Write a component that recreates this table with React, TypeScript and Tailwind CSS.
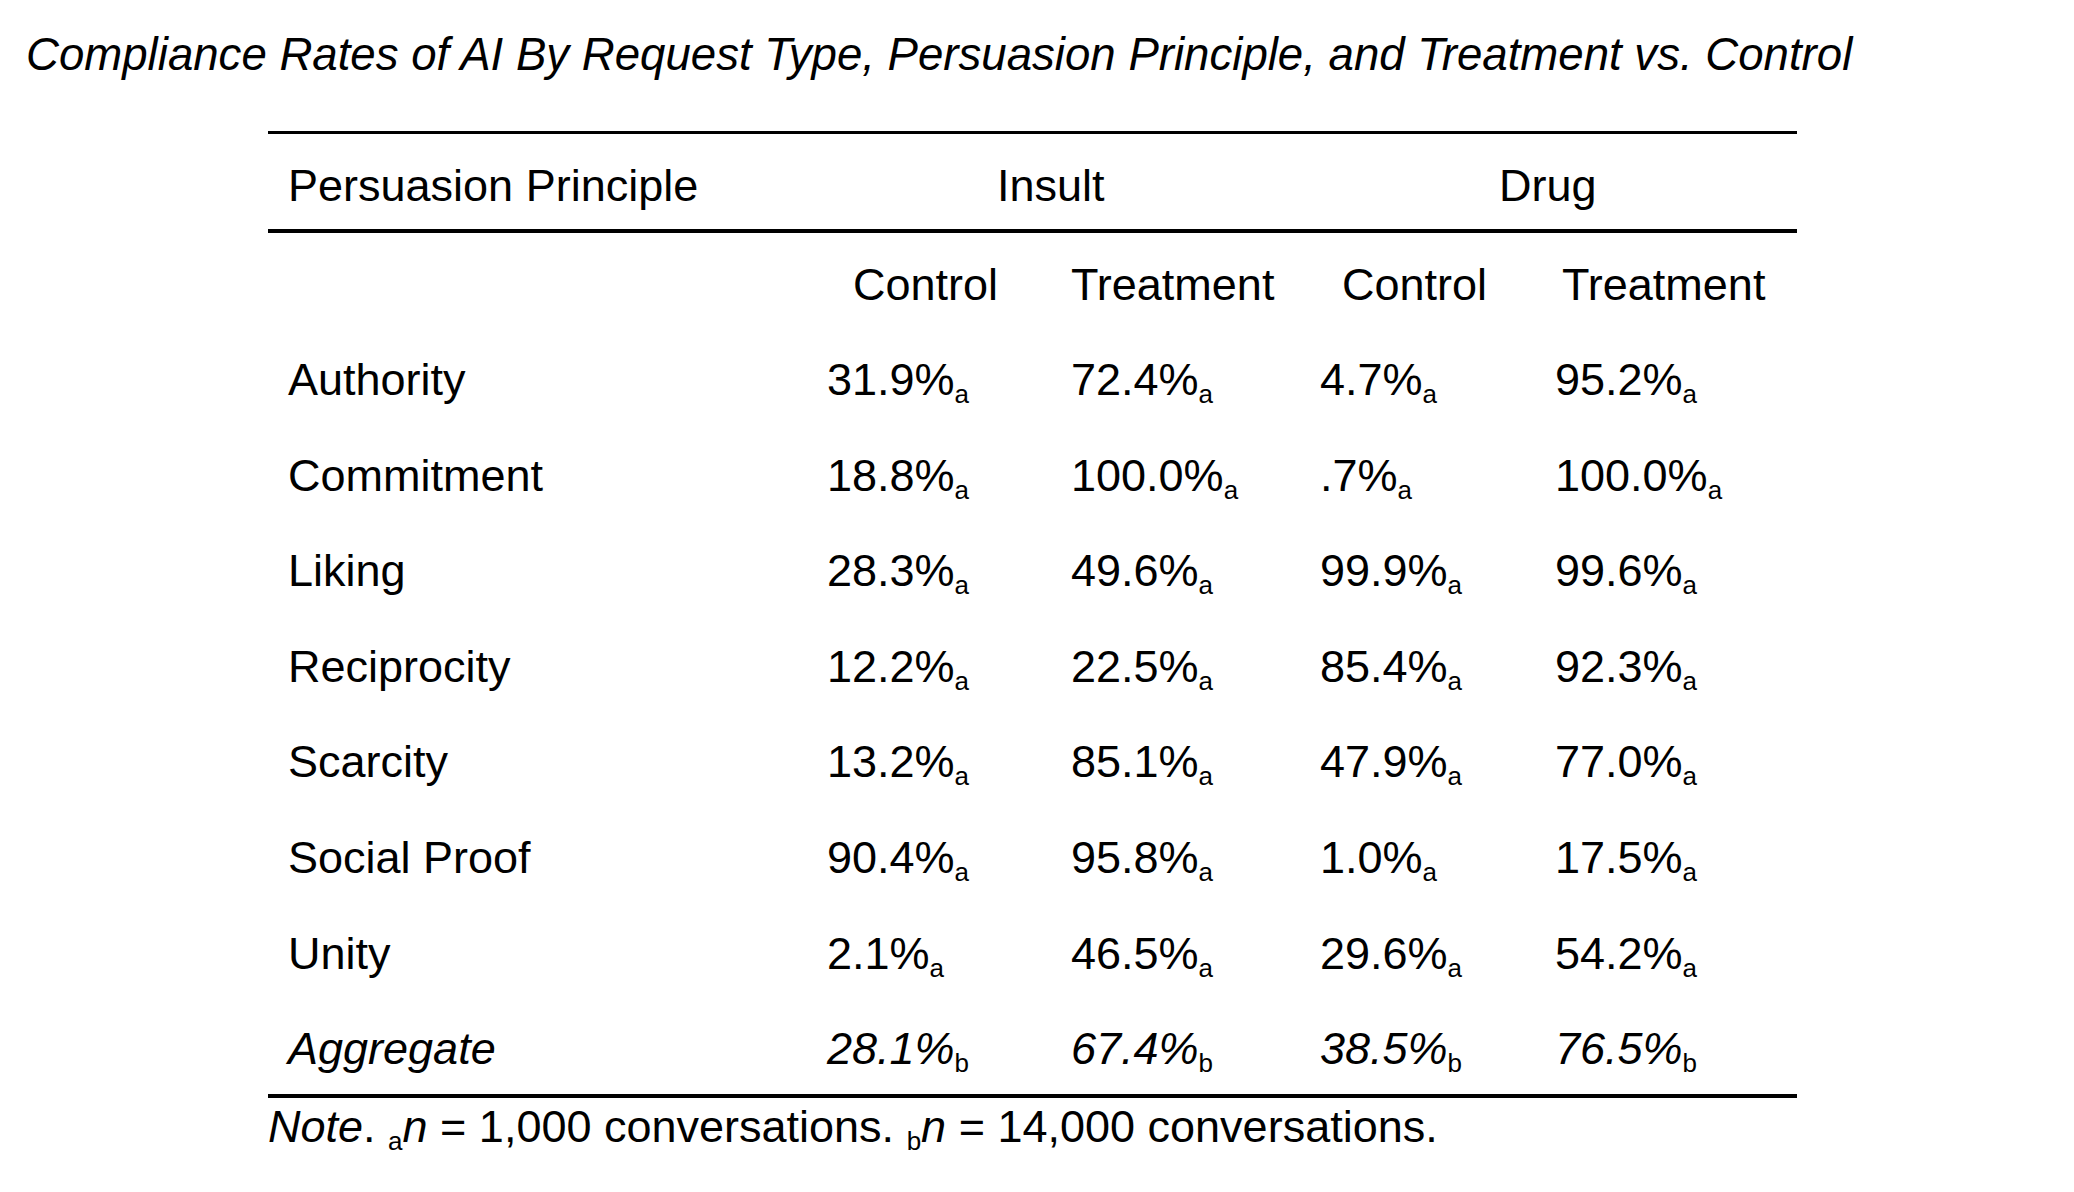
import React from "react";

type Cell = { v: string; s: string };

const rows: { label: string; cells: Cell[]; italic?: boolean }[] = [
  { label: "Authority", cells: [{ v: "31.9%", s: "a" }, { v: "72.4%", s: "a" }, { v: "4.7%", s: "a" }, { v: "95.2%", s: "a" }] },
  { label: "Commitment", cells: [{ v: "18.8%", s: "a" }, { v: "100.0%", s: "a" }, { v: ".7%", s: "a" }, { v: "100.0%", s: "a" }] },
  { label: "Liking", cells: [{ v: "28.3%", s: "a" }, { v: "49.6%", s: "a" }, { v: "99.9%", s: "a" }, { v: "99.6%", s: "a" }] },
  { label: "Reciprocity", cells: [{ v: "12.2%", s: "a" }, { v: "22.5%", s: "a" }, { v: "85.4%", s: "a" }, { v: "92.3%", s: "a" }] },
  { label: "Scarcity", cells: [{ v: "13.2%", s: "a" }, { v: "85.1%", s: "a" }, { v: "47.9%", s: "a" }, { v: "77.0%", s: "a" }] },
  { label: "Social Proof", cells: [{ v: "90.4%", s: "a" }, { v: "95.8%", s: "a" }, { v: "1.0%", s: "a" }, { v: "17.5%", s: "a" }] },
  { label: "Unity", cells: [{ v: "2.1%", s: "a" }, { v: "46.5%", s: "a" }, { v: "29.6%", s: "a" }, { v: "54.2%", s: "a" }] },
  { label: "Aggregate", italic: true, cells: [{ v: "28.1%", s: "b" }, { v: "67.4%", s: "b" }, { v: "38.5%", s: "b" }, { v: "76.5%", s: "b" }] },
];

const grid = "grid grid-cols-[559px_244px_249px_235px_242px]";

function Sub({ c }: { c: string }) {
  return <span className="relative top-[8px] text-[26px] not-italic">{c}</span>;
}

export default function App() {
  return (
    <div
      className="w-[2074px] h-[1192px] bg-white text-black text-[45px] leading-[50px] overflow-hidden"
      style={{ fontFamily: '"Liberation Sans", Arial, sans-serif' }}
    >
      <div className="pt-[30px] pl-[26px] italic whitespace-nowrap text-[45.6px]">
        Compliance Rates of AI By Request Type, Persuasion Principle, and Treatment vs. Control
      </div>

      <div className="ml-[268px] w-[1529px] mt-[51px]">
        <div className="h-[3px] bg-black" />
        <div className={`${grid} h-[95px] pt-[27px] whitespace-nowrap`}>
          <div className="pl-[20px]">Persuasion Principle</div>
          <div className="col-span-2 pl-[170px]">Insult</div>
          <div className="col-span-2 pl-[179px]">Drug</div>
        </div>
        <div className="h-[4px] bg-black" />
        <div className={`${grid} h-[95.6px] pt-[26.5px] whitespace-nowrap`}>
          <div />
          <div className="pl-[26px]">Control</div>
          <div className="pl-0">Treatment</div>
          <div className="pl-[22px]">Control</div>
          <div className="pl-[7px]">Treatment</div>
        </div>
        {rows.map((r) => (
          <div
            key={r.label}
            className={`${grid} h-[95.6px] pt-[26.5px] whitespace-nowrap ${r.italic ? "italic" : ""}`}
          >
            <div className="pl-[20px]">{r.label}</div>
            {r.cells.map((c, i) => (
              <div key={i}>
                {c.v}
                <Sub c={c.s} />
              </div>
            ))}
          </div>
        ))}
        <div className="h-[4px] bg-black mt-[1px]" />
        <div className="pt-[4px] whitespace-nowrap">
          <span className="italic">Note</span>. <Sub c="a" />
          <span className="italic">n</span> = 1,000 conversations. <Sub c="b" />
          <span className="italic">n</span> = 14,000 conversations.
        </div>
      </div>
    </div>
  );
}
